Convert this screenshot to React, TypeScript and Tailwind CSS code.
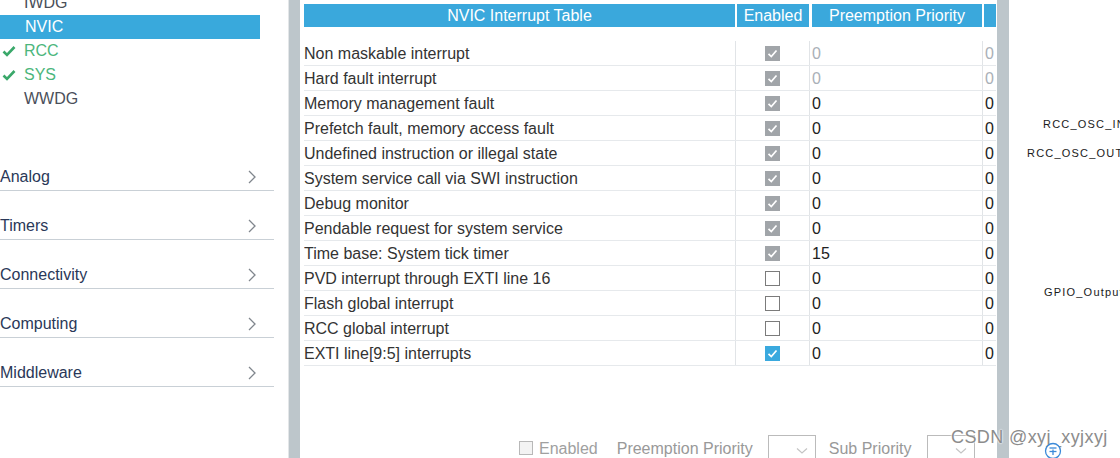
import React from "react";

type Row = { name: string; state: "dis" | "off" | "on"; pre: string; dim?: boolean };

const rows: Row[] = [
  { name: "Non maskable interrupt", state: "dis", pre: "0", dim: true },
  { name: "Hard fault interrupt", state: "dis", pre: "0", dim: true },
  { name: "Memory management fault", state: "dis", pre: "0" },
  { name: "Prefetch fault, memory access fault", state: "dis", pre: "0" },
  { name: "Undefined instruction or illegal state", state: "dis", pre: "0" },
  { name: "System service call via SWI instruction", state: "dis", pre: "0" },
  { name: "Debug monitor", state: "dis", pre: "0" },
  { name: "Pendable request for system service", state: "dis", pre: "0" },
  { name: "Time base: System tick timer", state: "dis", pre: "15" },
  { name: "PVD interrupt through EXTI line 16", state: "off", pre: "0" },
  { name: "Flash global interrupt", state: "off", pre: "0" },
  { name: "RCC global interrupt", state: "off", pre: "0" },
  { name: "EXTI line[9:5] interrupts", state: "on", pre: "0" },
];

const Tick = () => (
  <svg viewBox="0 0 15 15" className="w-[15px] h-[15px]">
    <polyline points="3.5,7.8 6.3,10.5 11.5,4.5" fill="none" stroke="white" strokeWidth="1.7" />
  </svg>
);

function Box({ state }: { state: Row["state"] }) {
  if (state === "dis")
    return (
      <div className="w-[15px] h-[15px] bg-[#a1a5a9]">
        <Tick />
      </div>
    );
  if (state === "on")
    return (
      <div className="w-[15px] h-[15px] bg-[#3aa9de]">
        <Tick />
      </div>
    );
  return <div className="w-[15px] h-[15px] border-[1.5px] border-[#7b7b7b] bg-white" />;
}

const GreenCheck = () => (
  <svg viewBox="0 0 14 12" className="w-[14px] h-[12px]">
    <polyline points="1.5,6.5 5,10 12.5,2" fill="none" stroke="#3aa86a" strokeWidth="2.6" />
  </svg>
);

const Chevron = () => (
  <svg viewBox="0 0 10 16" className="w-[10px] h-[16px]">
    <polyline points="2,2 8,8 2,14" fill="none" stroke="#80868d" strokeWidth="1.3" />
  </svg>
);

const SmallDown = () => (
  <svg viewBox="0 0 12 8" className="w-[12px] h-[8px]">
    <polyline points="1,1.5 6,6 11,1.5" fill="none" stroke="#c4c4c4" strokeWidth="1.2" />
  </svg>
);

export default function App() {
  const cats = ["Analog", "Timers", "Connectivity", "Computing", "Middleware"];
  return (
    <div
      className="relative w-[1120px] h-[458px] flex overflow-hidden bg-white text-[16px]"
      style={{ fontFamily: '"Liberation Sans", Arial, sans-serif' }}
    >
      {/* left panel */}
      <div className="w-[289px] shrink-0 h-full border-r border-[#e3e6e8] flex flex-col overflow-hidden">
        <div className="-mt-[9px] flex flex-col">
          <div className="h-[24px] leading-[24px] pl-[24px] text-[#4a4f5a]">IWDG</div>
          <div className="h-[24px] leading-[24px] pl-[25px] w-[260px] bg-[#39a9dc] text-white">NVIC</div>
          <div className="h-[24px] leading-[24px] flex items-center">
            <div className="w-[24px] pl-[2px] flex items-center"><GreenCheck /></div>
            <span className="text-[#4cb67c]">RCC</span>
          </div>
          <div className="h-[24px] leading-[24px] flex items-center">
            <div className="w-[24px] pl-[2px] flex items-center"><GreenCheck /></div>
            <span className="text-[#4cb67c]">SYS</span>
          </div>
          <div className="h-[24px] leading-[24px] pl-[24px] text-[#4a4f5a]">WWDG</div>
        </div>
        <div className="mt-[31px] flex flex-col">
          {cats.map((c) => (
            <div
              key={c}
              className="w-[274px] h-[49px] border-b border-[#c9d0d6] flex items-end justify-between pb-[3px] pr-[17px]"
            >
              <span className="leading-[20px] text-[#2a3858]">{c}</span>
              <div className="h-[20px] flex items-center">
                <Chevron />
              </div>
            </div>
          ))}
        </div>
      </div>

      {/* gray strip */}
      <div className="w-[11px] shrink-0 h-full bg-[#bdc6cb]" />

      {/* middle panel */}
      <div className="w-[697px] shrink-0 h-full flex flex-col overflow-hidden pl-[4px] pt-[4px]">
        <div className="flex h-[23px] text-white leading-[23px]">
          <div className="w-[431px] bg-[#3aa8dc] text-center">NVIC Interrupt Table</div>
          <div className="w-[2px]" />
          <div className="w-[72px] bg-[#3aa8dc] text-center">Enabled</div>
          <div className="w-[3px]" />
          <div className="w-[170px] bg-[#3aa8dc] text-center">Preemption Priority</div>
          <div className="w-[2px]" />
          <div className="w-[12px] bg-[#3aa8dc]" />
        </div>
        <div className="mt-[14px] flex flex-col w-[692px]">
          {rows.map((r) => (
            <div key={r.name} className="flex h-[25px] border-b border-[#e6e9ec] leading-[26px] text-[#333]">
              <div className="w-[431px] whitespace-nowrap overflow-hidden">{r.name}</div>
              <div className="w-[74px] border-l border-[#e1e4e7] flex items-center justify-center">
                <Box state={r.state} />
              </div>
              <div className={`w-[173px] border-l border-[#e1e4e7] pl-[2px] ${r.dim ? "text-[#aab0b7]" : "text-[#222]"}`}>
                {r.pre}
              </div>
              <div className={`w-[14px] border-l border-[#e1e4e7] pl-[2px] overflow-hidden ${r.dim ? "text-[#aab0b7]" : "text-[#222]"}`}>
                0
              </div>
            </div>
          ))}
        </div>
        <div className="mt-auto h-[23px] flex items-start pl-[215px] text-[#a0a0a0] whitespace-nowrap">
          <div className="mt-[6px] w-[14px] h-[14px] border border-[#b8b8b8] bg-[#f3f3f3]" />
          <span className="ml-[6px] mt-[4px] leading-[20px]">Enabled</span>
          <span className="ml-[19px] mt-[4px] leading-[20px] text-[#999]">Preemption Priority</span>
          <div className="ml-[15px] w-[48px] h-[30px] border border-[#bbbbbb] flex items-start justify-end pr-[7px] pt-[11px]">
            <SmallDown />
          </div>
          <span className="ml-[13px] mt-[4px] leading-[20px] text-[#999]">Sub Priority</span>
          <div className="ml-[16px] w-[48px] h-[30px] border border-[#bbbbbb] flex items-start justify-end pr-[7px] pt-[11px]">
            <SmallDown />
          </div>
        </div>
      </div>

      {/* right gray strip */}
      <div className="w-[12px] shrink-0 h-full bg-[#bdc6cb]" />

      {/* right diagram canvas */}
      <div className="relative flex-1 h-full overflow-hidden text-[11px] tracking-[1.2px] text-[#1a1a1a] whitespace-nowrap">
        <span className="absolute left-[34px] top-[117px] leading-[14px]">RCC_OSC_IN</span>
        <span className="absolute left-[18px] top-[146px] leading-[14px]">RCC_OSC_OUT</span>
        <span className="absolute left-[35px] top-[285px] leading-[14px]">GPIO_Output</span>
      </div>

      {/* watermark & floating icon */}
      <div
        className="absolute left-[951px] top-[426px] text-[18px] tracking-[0.4px] leading-[22px] text-[#8c8c8c] whitespace-nowrap"
        style={{ textShadow: "0 0 2px #fff, 0 0 2px #fff" }}
      >
        CSDN @xyj_xyjxyj
      </div>
      <svg viewBox="0 0 18 18" className="absolute left-[1044px] top-[442px] w-[18px] h-[18px]">
        <circle cx="9" cy="9" r="7.5" fill="white" stroke="#3b8ad9" strokeWidth="1.3" />
        <line x1="5.5" y1="6" x2="12.5" y2="6" stroke="#3b8ad9" strokeWidth="1.3" />
        <line x1="5.5" y1="9.5" x2="12.5" y2="9.5" stroke="#3b8ad9" strokeWidth="1.3" />
        <line x1="9" y1="7.5" x2="9" y2="13" stroke="#3b8ad9" strokeWidth="1.3" />
      </svg>
    </div>
  );
}
